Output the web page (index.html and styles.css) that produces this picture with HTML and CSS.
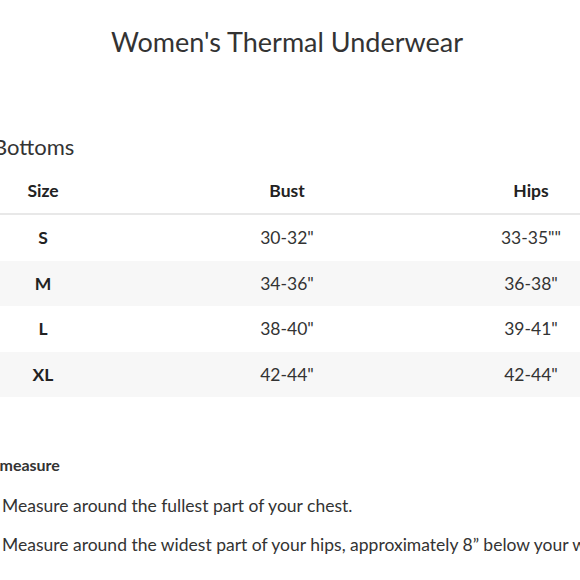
FILE: index.html
```html
<!DOCTYPE html>
<html lang="en">
<head>
<meta charset="utf-8">
<title>Women's Thermal Underwear</title>
<link rel="stylesheet" href="styles.css">
</head>
<body>
<div class="page">
  <h1 class="title">Women's Thermal Underwear</h1>
  <h2 class="section-title">Bottoms</h2>
  <table class="size-table">
    <thead>
      <tr><th>Size</th><th>Bust</th><th>Hips</th></tr>
    </thead>
    <tbody>
      <tr><td class="size">S</td><td>30-32"</td><td>33-35""</td></tr>
      <tr class="alt"><td class="size">M</td><td>34-36"</td><td>36-38"</td></tr>
      <tr><td class="size">L</td><td>38-40"</td><td>39-41"</td></tr>
      <tr class="alt"><td class="size">XL</td><td>42-44"</td><td>42-44"</td></tr>
    </tbody>
  </table>
  <h3 class="measure-title">How to measure</h3>
  <ul class="measure-list">
    <li>Measure around the fullest part of your chest.</li>
    <li>Measure around the widest part of your hips, approximately 8” below your waist.</li>
  </ul>
</div>
</body>
</html>
```
FILE: styles.css
```css
html, body {
  margin: 0;
  padding: 0;
  background: #ffffff;
  overflow: hidden;
}
body {
  font-family: Lato, "Open Sans", sans-serif;
  color: #333333;
  width: 580px;
  height: 580px;
}
.page {
  width: 732px;
  margin-left: -79px;
}
.title {
  margin: 0;
  padding-top: 26px;
  font-size: 27px;
  line-height: 32px;
  font-weight: 400;
  text-align: center;
  color: #333333;
}
.section-title {
  margin: 77px 0 9px 72px;
  font-size: 22px;
  line-height: 24px;
  font-weight: 400;
  color: #333333;
}
.size-table {
  width: 732px;
  border-collapse: collapse;
  table-layout: fixed;
}
.size-table th {
  height: 45px;
  padding: 0;
  font-size: 17.5px;
  font-weight: 700;
  color: #222222;
  text-align: center;
  border-bottom: 2px solid #e8e8e8;
}
.size-table td {
  height: 45.5px;
  padding: 0;
  font-size: 17.5px;
  text-align: center;
  color: #333333;
}
.size-table td.size {
  font-weight: 700;
  color: #222222;
}
.size-table tr.alt td {
  background: #f7f7f7;
}
.measure-title {
  margin: 58px 0 0 22px;
  font-size: 16px;
  line-height: 20px;
  font-weight: 700;
  color: #333333;
}
.measure-list {
  list-style: none;
  margin: 19px 0 0 81px;
  padding: 0;
  white-space: nowrap;
}
.measure-list li {
  font-size: 17.5px;
  line-height: 24px;
  margin-bottom: 15px;
  color: #333333;
}
```
